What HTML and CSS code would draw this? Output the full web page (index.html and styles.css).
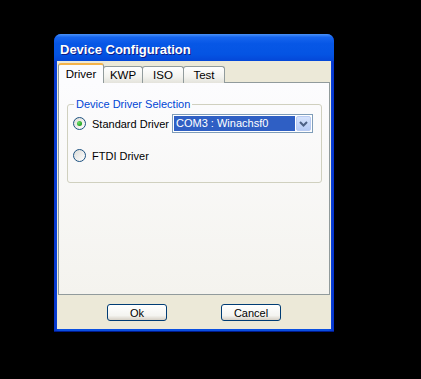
FILE: index.html
```html
<!DOCTYPE html>
<html lang="en">
<head>
  <meta charset="UTF-8" />
  <title>Device Configuration</title>
  <link rel="stylesheet" href="styles.css">
</head>
<body>
  <div class="window">
    <div class="titlebar">Device Configuration</div>
    <div class="client">
      <div class="tabs">
        <div class="tab active">Driver</div>
        <div class="tab tab-kwp">KWP</div>
        <div class="tab tab-iso">ISO</div>
        <div class="tab tab-test">Test</div>
      </div>
      <div class="panel">
        <fieldset class="group">
          <legend>Device Driver Selection</legend>
          <div class="row">
            <span class="radio"><span class="dot"></span></span>
            <span class="label">Standard Driver</span>
            <div class="combo">
              <span class="combo-text">COM3 : Winachsf0</span>
              <span class="combo-btn">
                <svg width="9" height="6" viewBox="0 0 9 6"><path d="M1 1 L4.5 4.5 L8 1" fill="none" stroke="#4d6185" stroke-width="2"/></svg>
              </span>
            </div>
          </div>
          <div class="row row-2">
            <span class="radio"></span>
            <span class="label">FTDI Driver</span>
          </div>
        </fieldset>
      </div>
      <div class="buttons">
        <button type="button">Ok</button>
        <button type="button">Cancel</button>
      </div>
    </div>
  </div>
</body>
</html>
```

FILE: styles.css
```css
body {
  margin: 0;
  background-color: #000;
  font-family: "Liberation Sans", Arial, sans-serif;
  font-size: 11px;
  color: #000;
  padding: 34px 0 0 54px;
  height: 379px;
  box-sizing: border-box;
  overflow: hidden;
}
.window {
  width: 280px;
  height: 298px;
  box-sizing: border-box;
  padding: 0 3px 3px 3px;
  border-radius: 7px 7px 0 0;
  background: linear-gradient(to right, #0632c8, #0a4fe0 2%, #0a4fe0 98%, #0632c8);
  box-shadow: inset 0 -1px 0 #001a8c;
}
.titlebar {
  height: 27px;
  box-sizing: border-box;
  display: flex;
  align-items: center;
  margin: 0 -3px;
  padding: 3px 0 0 6px;
  border-radius: 7px 7px 0 0;
  background: linear-gradient(to bottom, #4a92f8 0, #1665ee 12%, #0757e6 35%, #0454e3 75%, #0447d8 100%);
  color: #fff;
  font-weight: bold;
  font-size: 13px;
  text-shadow: 1px 1px 0 #0f1c89;
}
.client {
  height: 268px;
  box-sizing: border-box;
  background-color: #ece9d8;
  padding: 2px 1px 0 1px;
}
.tabs {
  display: flex;
  align-items: flex-end;
  height: 20px;
  margin-bottom: -1px;
  position: relative;
  z-index: 1;
}
.tab {
  height: 17px;
  box-sizing: border-box;
  border: 1px solid #919b9c;
  border-bottom: none;
  border-radius: 3px 3px 0 0;
  background: linear-gradient(#ffffff, #f3f3ef 60%, #e4e3dc);
  display: flex;
  align-items: center;
  justify-content: center;
  margin-left: -1px;
  font-size: 11.5px;
}
.tab.active {
  height: 20px;
  width: 46px;
  margin-left: 0;
  background: #fcfcfe;
  border-top: 2px solid #f5b34a;
  padding-bottom: 1px;
  position: relative;
  z-index: 2;
}
.tab-kwp { width: 40px; }
.tab-iso { width: 42px; }
.tab-test { width: 42px; }
.panel {
  height: 213px;
  box-sizing: border-box;
  border: 1px solid #919b9c;
  background: linear-gradient(#fcfcfe, #f4f3ee);
  padding: 15px 7px 0 8px;
}
.group {
  margin: 0;
  border: 1px solid #d0d0bf;
  border-radius: 3px;
  padding: 0 8px 17px 5px;
}
.group legend {
  color: #0046d5;
  line-height: 13px;
  padding: 0 2px;
  margin-left: 1px;
}
.row {
  display: flex;
  align-items: center;
  height: 19px;
  margin-top: 3px;
}
.row-2 {
  margin-top: 13px;
}
.radio {
  width: 13px;
  height: 13px;
  box-sizing: border-box;
  border: 1px solid #1c5180;
  border-radius: 50%;
  background: linear-gradient(135deg, #dcdcd7, #ffffff);
  display: flex;
  align-items: center;
  justify-content: center;
  margin-right: 6px;
}
.dot {
  width: 5px;
  height: 5px;
  border-radius: 50%;
  background: radial-gradient(circle at 35% 35%, #6ee06e, #21a121 70%);
}
.combo {
  margin-left: auto;
  width: 141px;
  height: 19px;
  box-sizing: border-box;
  border: 1px solid #7f9db9;
  background: #fff;
  display: flex;
  align-items: stretch;
  padding: 1px;
}
.combo-text {
  flex: 1;
  background: #2f5fc4;
  color: #fff;
  padding-left: 2px;
  margin-right: 1px;
  line-height: 15px;
}
.combo-btn {
  width: 15px;
  border-radius: 2px;
  background: linear-gradient(#d6e3fc, #b6cbf6);
  border: 1px solid #b9cbf3;
  box-sizing: border-box;
  display: flex;
  align-items: center;
  justify-content: center;
}
.buttons {
  display: flex;
  justify-content: center;
  gap: 54px;
  margin-top: 9px;
}
button {
  width: 60px;
  height: 17px;
  padding: 0;
  font-family: "Liberation Sans", Arial, sans-serif;
  font-size: 11px;
  color: #000;
  border: 1px solid #003c74;
  border-radius: 3px;
  background: linear-gradient(#ffffff, #f4f4f0 70%, #d6d0c5);
  cursor: pointer;
}
```
